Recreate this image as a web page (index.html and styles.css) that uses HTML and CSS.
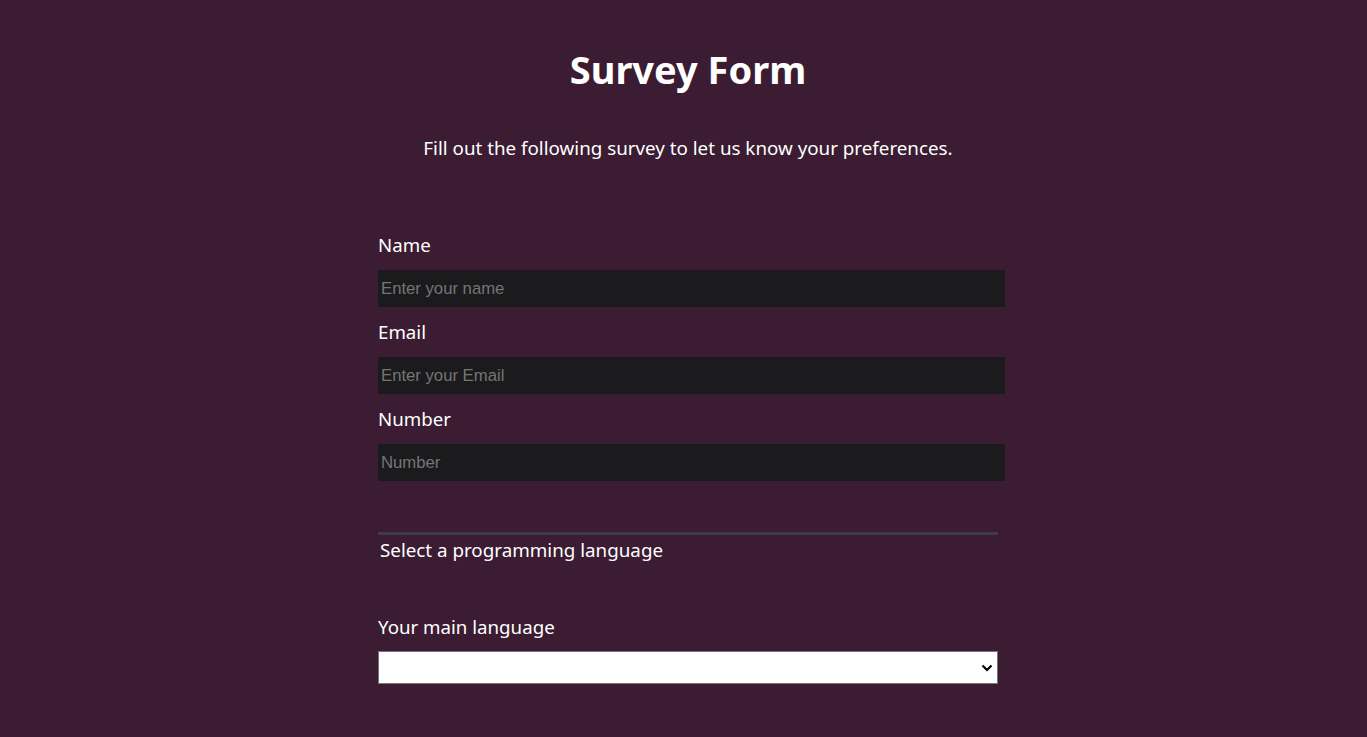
FILE: index.html
```html
<!DOCTYPE html>
<html lang="en">
<head>
<meta charset="utf-8">
<title>Survey Form</title>
<link rel="stylesheet" href="styles.css">
</head>
<body>
<main class="page">
  <h1 class="title">Survey Form</h1>
  <p class="description">Fill out the following survey to let us know your preferences.</p>
  <form class="survey">
    <div class="field">
      <label class="label" for="name">Name</label>
      <input class="input" id="name" type="text" placeholder="Enter your name">
    </div>
    <div class="field">
      <label class="label" for="email">Email</label>
      <input class="input" id="email" type="email" placeholder="Enter your Email">
    </div>
    <div class="field">
      <label class="label" for="number">Number</label>
      <input class="input" id="number" type="number" placeholder="Number">
    </div>
    <fieldset class="group">
      <div class="group-title">Select a programming language</div>
      <label class="label label-select" for="lang">Your main language</label>
      <select class="select" id="lang">
        <option value=""></option>
      </select>
    </fieldset>
  </form>
</main>
</body>
</html>
```
FILE: styles.css
```css
html, body {
  margin: 0;
  padding: 0;
  background: #3b1c32;
}
body {
  color: #ffffff;
  font-family: "Noto Sans", "Open Sans", sans-serif;
}
.page {
  padding: 0 0 0 9px;
}
.title {
  margin: 0;
  padding-top: 44px;
  text-align: center;
  font-size: 38px;
  line-height: 50px;
  font-weight: 700;
}
.description {
  margin: 41px 0 0;
  text-align: center;
  font-size: 18.8px;
  line-height: 26px;
}
.survey {
  width: 620px;
  margin: 71px auto 0;
}
.field {
  display: flex;
  flex-direction: column;
  margin-bottom: 12px;
}
.label {
  display: block;
  font-size: 18.7px;
  line-height: 25px;
  margin-bottom: 13px;
}
.input {
  box-sizing: border-box;
  width: 627px;
  height: 37px;
  border: none;
  background: #1b1b1d;
  color: #ffffff;
  padding: 0 3px;
  font-family: "Liberation Sans", Arial, sans-serif;
  font-size: 16.7px;
  outline: none;
}
.input::placeholder {
  color: #757575;
}
.group {
  margin: 51px 0 0;
  padding: 0;
  border: none;
  border-top: 3px solid #3b3b4f;
}
.group-title {
  padding-left: 2px;
  font-size: 18.8px;
  line-height: 26px;
  margin-top: 2px;
}
.label-select {
  margin-top: 51px;
  margin-bottom: 12px;
}
.select {
  box-sizing: border-box;
  width: 620px;
  height: 33px;
  background: #ffffff url("data:image/svg+xml,%3Csvg xmlns='http://www.w3.org/2000/svg' width='12' height='8' viewBox='0 0 12 8'%3E%3Cpath d='M1.5 1.5 6 6l4.5-4.5' fill='none' stroke='%23000' stroke-width='2.2'/%3E%3C/svg%3E") no-repeat right 4px center;
  border: 1px solid #767676;
  border-radius: 0;
  -webkit-appearance: none;
  appearance: none;
  font-family: "Liberation Sans", Arial, sans-serif;
  font-size: 16px;
}
```
